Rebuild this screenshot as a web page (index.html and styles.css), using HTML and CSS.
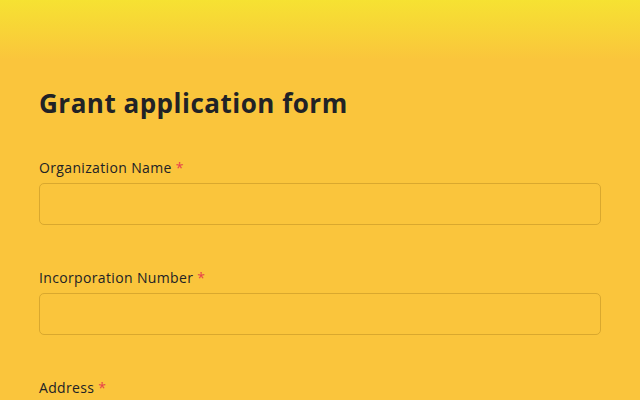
FILE: index.html
```html
<!DOCTYPE html>
<html lang="en">

<head>
    <meta charset="UTF-8">
    <meta name="viewport" content="width=device-width, initial-scale=1.0">
    <title>Grant application form</title>
    <link rel="stylesheet" href="styles.css">
</head>

<body>
    <div class="page">
        <form class="form" action="#">
            <h1 class="title">Grant application form</h1>

            <div class="field">
                <label for="org_name">Organization Name <span class="req">*</span></label>
                <input type="text" id="org_name">
            </div>

            <div class="field">
                <label for="inc_number">Incorporation Number <span class="req">*</span></label>
                <input type="text" id="inc_number">
            </div>

            <div class="field">
                <label for="address">Address <span class="req">*</span></label>
                <input type="text" id="address">
            </div>
        </form>
    </div>
</body>

</html>
```

FILE: styles.css
```css
html,
body {
    margin: 0;
    padding: 0;
}

body {
    background: #fac53c;
    font-family: "Open Sans", "Noto Sans", sans-serif;
    color: #212226;
}

.page {
    min-height: 400px;
    background: linear-gradient(to bottom, #f6e232 0px, #fac53c 60px, #fac53c 100%);
}

.form {
    padding: 86px 39px 0 39px;
}

.title {
    margin: 0 0 36px 0;
    font-size: 26px;
    font-weight: 700;
    line-height: 34px;
    letter-spacing: 0.5px;
}

.field {
    margin-bottom: 41px;
}

.field label {
    display: block;
    font-size: 14px;
    line-height: 20px;
    letter-spacing: 0.35px;
    padding-top: 2px;
    margin-bottom: 5px;
}

.req {
    color: #e8414c;
}

.field input {
    display: block;
    box-sizing: border-box;
    width: 100%;
    height: 42px;
    background: transparent;
    border: 1px solid #d9a82e;
    border-radius: 5px;
    margin: 0;
}
```
